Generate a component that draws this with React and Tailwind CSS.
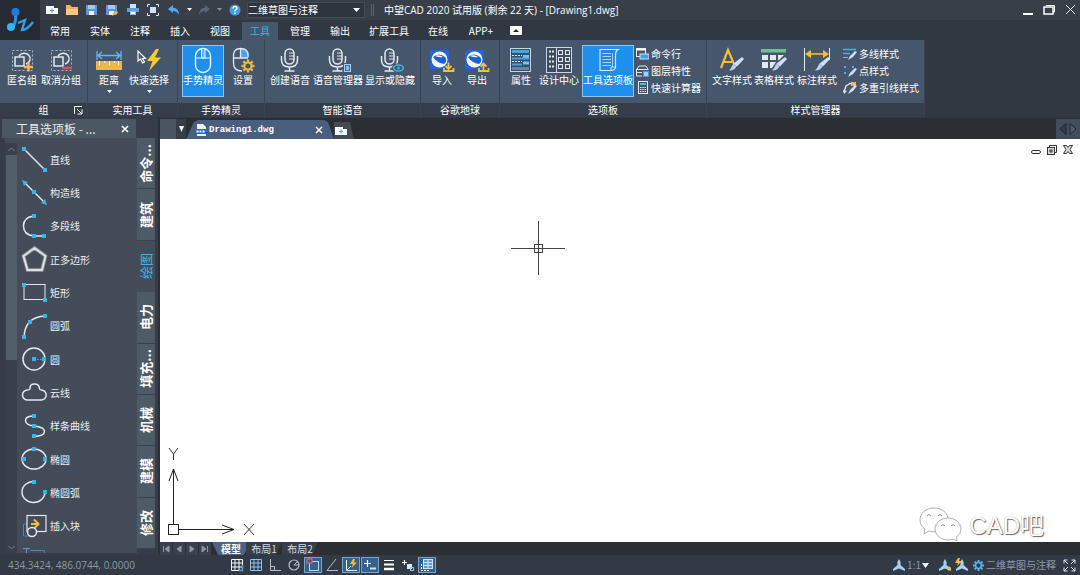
import { useState } from 'react';

const BLUE = '#3cb4ea';
const SKY = '#7cc0f0';
const GOLD = '#f5bd3a';
const LINE = '#e3e9f0';

const Svg = ({ w = 26, h = 26, children }) => (
    <svg width={w} height={h} viewBox={`0 0 ${w} ${h}`} fill="none" className="shrink-0" aria-hidden="true">
        {children}
    </svg>
);

const Dot = ({ x, y }) => <rect x={x - 2} y={y - 2} width="4" height="4" fill={BLUE} />;

const Brush = ({ x, y }) => (
    <g transform={`translate(${x} ${y})`}>
        <path d="M13 0 L15 2 L8 9.5 L4 7 Z" fill="#cfe0f8" />
        <path d="M4 7 L7.5 9.5 Q5 14 0 13.5 Q2.5 11 4 7 Z" fill="#b4d2fa" />
    </g>
);

const Gear = ({ x, y, r, color }) => (
    <g transform={`translate(${x} ${y})`} stroke={color}>
        <circle r={r * 0.55} strokeWidth={r * 0.32} />
        {[0, 45, 90, 135, 180, 225, 270, 315].map((a) => (
            <path key={a} d={`M0 ${-r * 0.65} V${-r}`} strokeWidth={r * 0.36} transform={`rotate(${a})`} />
        ))}
    </g>
);

/* ---- ribbon icons ---- */

const GroupIcon = ({ remove }) => (
    <Svg>
        <rect x="3.5" y="3.5" width="20" height="20" stroke="#aeb8c4" strokeDasharray="2 2" />
        <path d="M10 9 A6 5.5 0 1 1 17 17" stroke={LINE} strokeWidth="1.5" />
        <rect x="6" y="10" width="9" height="9" stroke={LINE} strokeWidth="1.5" />
        {remove ? (
            <path d="M14 21 H24" stroke="#e2504c" strokeWidth="2.5" />
        ) : (
            <path d="M15 20 H24 M19.5 15.5 V24.5" stroke={GOLD} strokeWidth="2.5" />
        )}
    </Svg>
);

const DistanceIcon = () => (
    <Svg>
        <path d="M1 4 V13 M25 4 V13 M2 8.5 H24 M6 5 L2 8.5 L6 12 M20 5 L24 8.5 L20 12" stroke="#6fb3e8" strokeWidth="1.3" />
        <rect x="0" y="14" width="26" height="9" fill="#f0b548" />
        <path d="M3.5 14 V18 M8.5 14 V16 M13.5 14 V18 M18.5 14 V16 M22.5 14 V18" stroke="#fff" />
    </Svg>
);

const QuickSelectIcon = () => (
    <Svg>
        <path d="M2 4 V14 L4.5 12 L6.5 16 L8.5 15 L6.5 11.5 H9.5 Z" stroke="#fff" strokeWidth="1.2" />
        <path d="M20 2 L11 14 H16.5 L13 24 L25 10.5 H19 L23 2 Z" fill="#fcc92f" />
    </Svg>
);

const MouseIcon = ({ gear }) => (
    <Svg w={26} h={28}>
        {gear ? (
            <>
                <path d="M11 3 H13 A6 6 0 0 1 18.5 12 H11 Z" fill="#4aa4e8" />
                <path d="M12 25 Q3.5 25 3.5 17 V9.5 Q3.5 2.5 10.5 2.5 Q18 2.5 18 9.5 V11 M3.5 12 H18 M10.5 3 V12" stroke={LINE} strokeWidth="1.3" />
                <Gear x={18} y={20} r={6.5} color={GOLD} />
            </>
        ) : (
            <>
                <rect x="5.5" y="2.5" width="15" height="24" rx="7.5" stroke="#eaf5ff" strokeWidth="1.4" />
                <path d="M5.5 12 H20.5" stroke="#eaf5ff" />
                <rect x="11.5" y="2.5" width="3.5" height="9.5" fill="#63b8fb" stroke="#eaf5ff" />
            </>
        )}
    </Svg>
);

const MicIcon = ({ badge }) => (
    <Svg w={28} h={26}>
        <rect x="9" y="2" width="9" height="15" rx="4.5" stroke={LINE} strokeWidth="1.5" />
        <path d="M5.5 9 V13 Q5.5 20 13.5 20 Q21.5 20 21.5 13 V9 M13.5 20 V23.5 M8.5 24 H18.5" stroke={LINE} strokeWidth="1.5" />
        <path d="M13 6 H18 M13 9 H18 M13 12 H18" stroke={LINE} />
        {badge === 'list' && (
            <>
                <rect x="19" y="16" width="9" height="9" fill="#46566b" />
                <rect x="20.5" y="17.5" width="6" height="7" fill="#386fa5" stroke="#9fd0f6" />
                <path d="M22 20 H25 M22 22 H25" stroke="#fff" />
            </>
        )}
        {badge === 'eye' && (
            <>
                <ellipse cx="22" cy="21" rx="6" ry="4.5" fill="#46566b" />
                <ellipse cx="22.5" cy="21" rx="4.8" ry="3" stroke={BLUE} strokeWidth="1.5" />
                <circle cx="22.5" cy="21" r="1.3" fill={BLUE} />
            </>
        )}
    </Svg>
);

const EarthIcon = ({ up }) => (
    <Svg>
        <rect x="1" y="3" width="19" height="19" fill="#1f66dd" />
        <circle cx="10.5" cy="12.5" r="8" fill="#f5f9ff" />
        <path d="M4 10 Q10 5 16 10 Q19 14 15 17 Q8 16 4 10 Z" fill="#1f5fd0" />
        <path d="M6 9 Q10 7 14 10 Q11 11 6 9 Z" fill="#fff" />
        <path
            d={up
                ? 'M19.5 23 V17 M16.5 19.5 L19.5 16.5 L22.5 19.5 M15 21 V24 H24.5 V21'
                : 'M19.5 15.5 V21.5 M16.5 19 L19.5 22 L22.5 19 M15 21 V24 H24.5 V21'}
            stroke="#f2c230"
            strokeWidth="1.8"
        />
    </Svg>
);

const PropertiesIcon = () => (
    <Svg>
        <rect x="2.5" y="1.5" width="20" height="23" fill="#33506f" stroke="#c9d6e4" />
        <rect x="4" y="3" width="17" height="3" fill="#4ea1dc" />
        <path d="M4 8.5 H14 M4 14.5 H14" stroke="#dbe5ef" strokeDasharray="2 1" />
        <path d="M15 9.5 H21 M15 16 H21" stroke={SKY} strokeWidth="3" />
        <path d="M4 11.5 H21 M4 17.5 H14" stroke="#4ea1dc" strokeWidth="2" />
        <path d="M4 21.5 H21" stroke="#708298" strokeWidth="3" />
    </Svg>
);

const DesignCenterIcon = () => (
    <Svg>
        <rect x=".5" y=".5" width="25" height="25" fill="#3d4b5d" stroke="#c9d6e4" />
        <path d="M10.5 1 V25" stroke="#c9d6e4" />
        <path d="M3 4.5 H9 M3 9.5 H9 M3 14.5 H9 M3 19.5 H9" stroke={LINE} strokeWidth="2" strokeDasharray="2 1" />
        {[3.5, 10.5, 17.5].map((y) => (
            <g key={y} stroke={LINE}>
                <rect x="12.5" y={y} width="4" height="4" />
                <rect x="19.5" y={y} width="4" height="4" />
            </g>
        ))}
    </Svg>
);

const PaletteIcon = () => (
    <Svg>
        <path d="M5 2.5 H23 Q20.5 4 20.5 8 V20 Q20 23.5 16 23.5 H5 Z" fill="#2b86da" stroke="#cfe9ff" strokeWidth="1.2" />
        <path d="M17.5 6 V20" stroke="#9fd0fb" />
        <path d="M7.5 6.5 H16 M7.5 9.5 H16 M7.5 12.5 H16 M7.5 15.5 H16 M7.5 18.5 H16" stroke="#a9d7ff" />
        <path d="M16 23 V20 H20" stroke="#cfe9ff" />
    </Svg>
);

const TextStyleIcon = () => (
    <Svg>
        <path d="M2 21 L9 3 L15 17 M5 15 H13" stroke={GOLD} strokeWidth="2.2" />
        <Brush x={10} y={10} />
    </Svg>
);

const TableStyleIcon = () => (
    <Svg>
        <rect x="0" y="2" width="25" height="3.5" fill="#6fc08c" />
        <path d="M1 8 H7 V13 H1 Z M9 8 H15 V13 H9 Z M17 8 H23 L18 13 H17 Z M1 15 H7 V21 H1 Z M9 15 H15 L11 21 H9 Z" fill={LINE} />
        <Brush x={11} y={10} />
    </Svg>
);

const DimStyleIcon = () => (
    <Svg>
        <path d="M.5 1 V24 M25.5 1 V13" stroke={LINE} />
        <path d="M3 7 H23" stroke={GOLD} strokeWidth="1.6" />
        <path d="M1 7 L7 3 V11 Z M25 7 L19 3 V11 Z" fill={GOLD} />
        <Brush x={11} y={10} />
    </Svg>
);

/* ---- small ribbon icons ---- */

const CommandIcon = () => (
    <Svg w={13} h={12}>
        <rect x=".5" y=".5" width="9" height="8" stroke={LINE} />
        <path d="M0 1.5 H10" stroke="#fff" strokeWidth="2" />
        <rect x="4" y="6" width="9" height="5" fill="#3fa0e4" stroke="#cfe4f6" />
    </Svg>
);

const LayerPropIcon = () => (
    <Svg w={13} h={12}>
        <path d="M1 4 L3 1 H10 L12 4 M.5 4.5 H12.5 M.5 7.5 H6 M.5 4 V11 H6" stroke={LINE} />
        <rect x="7" y="6" width="6" height="6" fill="#3fa0e4" />
        <path d="M8 8 H12 M8 10 H12" stroke="#fff" />
    </Svg>
);

const CalcIcon = () => (
    <Svg w={13} h={13}>
        <rect x="2.5" y=".5" width="9" height="12" fill="#40536a" stroke={LINE} />
        <path d="M4 3 H10" stroke="#5bb2ee" strokeWidth="2" />
        <path d="M4 6.5 H10 M4 8.5 H10 M4 10.5 H10" stroke={LINE} strokeDasharray="1.5 .8" />
    </Svg>
);

const SmallBrush = () => <path d="M14 4 L10 9 L5 12 L7 8 L12 3 Z" fill="#cfe0f8" />;

const MlineIcon = () => (
    <Svg w={14} h={12}>
        <path d="M0 1.5 H13 M0 5.5 H7" stroke={BLUE} strokeWidth="1.5" />
        <path d="M0 9.5 H5" stroke="#9fb0c2" />
        <SmallBrush />
    </Svg>
);

const PointIcon = () => (
    <Svg w={14} h={12}>
        <path d="M1 1 H3 V3 H1 Z M9 1 H11 V3 H9 Z M1 7 H3 V9 H1 Z" fill={BLUE} />
        <SmallBrush />
    </Svg>
);

const MleaderIcon = () => (
    <Svg w={14} h={12}>
        <path d="M1 10 L3 4 L7 1.5 H9" stroke={LINE} strokeWidth="1.3" />
        <path d="M0 8 L1 12 L4 9 Z" fill={LINE} />
        <rect x="8" y="0" width="5" height="4" fill={GOLD} />
        <SmallBrush />
    </Svg>
);

const RIBBON = [
    {
        label: '组',
        width: 'w-[88px]',
        pad: 'pl-0.5',
        launcher: true,
        tools: [
            { label: '匿名组', width: 'w-10', icon: <GroupIcon /> },
            { label: '取消分组', width: 'w-[38px]', icon: <GroupIcon remove /> },
        ],
    },
    {
        label: '实用工具',
        width: 'w-[90px]',
        tools: [
            { label: '距离', width: 'w-[42px]', icon: <DistanceIcon />, caret: true },
            { label: '快速选择', width: 'w-[38px]', icon: <QuickSelectIcon />, caret: true },
        ],
    },
    {
        label: '手势精灵',
        width: 'w-[87px]',
        pad: 'pl-1',
        tools: [
            { label: '手势精灵', width: 'w-[42px]', icon: <MouseIcon />, active: true },
            { label: '设置', width: 'w-[38px]', icon: <MouseIcon gear /> },
        ],
    },
    {
        label: '智能语音',
        width: 'w-[156px]',
        tools: [
            { label: '创建语音', width: 'w-[50px]', icon: <MicIcon /> },
            { label: '语音管理器', width: 'w-[46px]', icon: <MicIcon badge="list" /> },
            { label: '显示或隐藏', width: 'w-[58px]', icon: <MicIcon badge="eye" /> },
        ],
    },
    {
        label: '谷歌地球',
        width: 'w-[79px]',
        tools: [
            { label: '导入', width: 'w-[42px]', icon: <EarthIcon /> },
            { label: '导出', width: 'w-7', icon: <EarthIcon up /> },
        ],
    },
    {
        label: '选项板',
        width: 'w-[207px]',
        tools: [
            { label: '属性', width: 'w-[42px]', icon: <PropertiesIcon /> },
            { label: '设计中心', width: 'w-[34px] mr-1.5', icon: <DesignCenterIcon /> },
            { label: '工具选项板', width: 'w-[52px] mr-0.5', icon: <PaletteIcon />, active: true },
        ],
        small: [
            { label: '命令行', icon: <CommandIcon /> },
            { label: '图层特性', icon: <LayerPropIcon /> },
            { label: '快速计算器', icon: <CalcIcon /> },
        ],
    },
    {
        label: '样式管理器',
        width: 'w-[218px]',
        tools: [
            { label: '文字样式', width: 'w-[50px]', icon: <TextStyleIcon /> },
            { label: '表格样式', width: 'w-[34px]', icon: <TableStyleIcon /> },
            { label: '标注样式', width: 'w-[52px]', icon: <DimStyleIcon /> },
        ],
        small: [
            { label: '多线样式', icon: <MlineIcon /> },
            { label: '点样式', icon: <PointIcon /> },
            { label: '多重引线样式', icon: <MleaderIcon /> },
        ],
    },
];

const MENU = [
    { label: '常用', width: 'w-10' },
    { label: '实体', width: 'w-10' },
    { label: '注释', width: 'w-10' },
    { label: '插入', width: 'w-10' },
    { label: '视图', width: 'w-10' },
    { label: '工具', width: 'w-9 mx-0.5' },
    { label: '管理', width: 'w-10' },
    { label: '输出', width: 'w-10' },
    { label: '扩展工具', width: 'w-[58px]' },
    { label: '在线', width: 'w-10' },
    { label: 'APP+', width: 'w-[46px]' },
];

/* ---- quick access ---- */

const Caret = ({ color = '#fff' }) => (
    <Svg w={5} h={4}>
        <path d="M0 0 H5 L2.5 3 Z" fill={color} />
    </Svg>
);

const Disk = ({ as }) => (
    <Svg w={12} h={12}>
        <rect x="0" y="1" width="11" height="10" fill="#5d97d8" />
        <rect x="2" y="1" width="7" height="4" fill="#a9c9ec" />
        <rect x="3" y="7" width="5" height="4" fill="#eef5fc" />
        {as && <path d="M6 12 L7 9 L11 7 L12 9 Z" fill={GOLD} />}
    </Svg>
);

const NewIcon = () => (
    <Svg w={12} h={10}>
        <path d="M0 1 H8 V3 H12 V9 H0 Z" fill="#fff" />
        <path d="M6 3.5 V7.5 M4 5.5 H8" stroke="#4aa4e8" strokeWidth="1.2" />
    </Svg>
);

const UndoArrow = ({ flip, color }) => (
    <Svg w={12} h={12}>
        <path transform={flip ? 'translate(12 0) scale(-1 1)' : undefined} d="M0 5 L5 1 V3.5 Q11 4 11 11 Q9 7 5 7 V9 Z" fill={color} />
    </Svg>
);

const QUICK = [
    { label: '新建', width: 'w-5', icon: <NewIcon /> },
    {
        label: '打开',
        width: 'w-5',
        icon: (
            <Svg w={12} h={12}>
                <path d="M0 1 H4 L6 3 H12 V11 H0 Z" fill="#f5b060" />
                <path d="M0 5 H12 V11 H0 Z" fill="#fcc684" />
            </Svg>
        ),
    },
    { label: '保存', width: 'w-5', icon: <Disk /> },
    { label: '另存为', width: 'w-5', icon: <Disk as /> },
    {
        label: '打印',
        width: 'w-[21px]',
        icon: (
            <Svg w={12} h={12}>
                <rect x="3" y="0" width="6" height="4" fill="#cfe4f6" />
                <rect x="0" y="4" width="12" height="4" fill="#5ba3e4" />
                <rect x="3.5" y="7.5" width="5" height="3" fill="#fff" stroke="#8fc2ee" />
            </Svg>
        ),
    },
    {
        label: '打印预览',
        width: 'w-5',
        icon: (
            <Svg w={12} h={12}>
                <path d="M.5 3 V.5 H3 M9 .5 H11.5 V3 M11.5 9 V11.5 H9 M3 11.5 H.5 V9" stroke={LINE} />
                <rect x="3" y="3" width="6" height="6" fill="#cfe4f6" />
            </Svg>
        ),
    },
    { label: '放弃', width: 'w-[22px]', icon: <UndoArrow color="#5aa5e6" /> },
    { label: '放弃列表', width: 'w-2', icon: <Caret /> },
    { label: '重做', width: 'w-[22px]', icon: <UndoArrow flip color="#55677e" /> },
    { label: '重做列表', width: 'w-2', icon: <Caret color="#8a94a2" /> },
    {
        label: '帮助',
        width: 'w-6',
        icon: (
            <Svg w={12} h={12}>
                <circle cx="6" cy="6" r="5.5" fill="#3f9fe6" />
                <path d="M4 4.5 Q4 2.5 6 2.5 Q8 2.5 8 4.3 Q8 5.5 6 6.5 V7.5 M6 8.5 V10" stroke="#fff" strokeWidth="1.3" />
            </Svg>
        ),
    },
];

/* ---- palette ---- */

const DRAW = [
    { label: '直线', icon: <><path d="M3 3 L24 24" stroke={LINE} strokeWidth="1.5" /><Dot x={3} y={3} /><Dot x={24} y={24} /></> },
    {
        label: '构造线',
        icon: <><path d="M3 3 L24 24" stroke={LINE} strokeWidth="1.5" /><path d="M1 1 L7 3 L3 7 Z M26 26 L24 20 L20 24 Z" fill={BLUE} /><Dot x={13} y={13} /></>,
    },
    { label: '多段线', icon: <><path d="M13 3 Q2.5 4 2.5 13 Q2.5 22 13 23 H24" stroke={LINE} strokeWidth="1.5" /><Dot x={13} y={3} /><Dot x={13} y={23} /><Dot x={23} y={23} /></> },
    { label: '正多边形', icon: <><path d="M13.5 2 L24.5 10 L21 24 H6.5 L2.5 10 Z" stroke="#8d949c" strokeWidth="3.5" /><path d="M13.5 2 L24.5 10 L21 24 H6.5 L2.5 10 Z" stroke="#dde1e4" strokeWidth="1.8" /></> },
    { label: '矩形', icon: <><rect x="3" y="5.5" width="21" height="15" stroke={LINE} /><Dot x={3} y={6} /><Dot x={24} y={21} /></> },
    { label: '圆弧', icon: <><path d="M3 24 Q4 4 24 3" stroke={LINE} strokeWidth="1.5" /><Dot x={3} y={24} /><Dot x={9} y={9} /><Dot x={24} y={3} /></> },
    { label: '圆', icon: <><circle cx="13" cy="13" r="11" stroke={LINE} strokeWidth="1.5" /><path d="M13 13.5 H24" stroke={BLUE} strokeDasharray="1.5 1.5" /><Dot x={13} y={13} /><Dot x={23} y={13} /></> },
    { label: '云线', icon: <path d="M7 21 A5 5 0 0 1 6 11 Q8.5 11 9 10 Q8.500 5 13.5 5 Q18.5 5 18.5 10 Q19 11 20.500 11 A5 5 0 0 1 20 21 Z" stroke={LINE} strokeWidth="1.5" /> },
    { label: '样条曲线', icon: <><path d="M13 3 Q4 3 4.5 8 Q5 12 13 13 Q23.5 14 23.5 18.5 Q23.5 23 13 23.5" stroke={LINE} strokeWidth="1.5" /><Dot x={13} y={3} /><Dot x={13} y={13} /><Dot x={13} y={23} /></> },
    { label: '椭圆', icon: <><ellipse cx="13" cy="13" rx="12" ry="10" stroke={LINE} strokeWidth="1.5" /><Dot x={13} y={3} /><Dot x={3} y={13} /><Dot x={24} y={13} /></> },
    { label: '椭圆弧', icon: <><path d="M13 2.5 A11.5 10.5 0 1 0 24 13" stroke={LINE} strokeWidth="1.5" /><Dot x={13} y={3} /><Dot x={24} y={13} /></> },
    {
        label: '插入块',
        icon: (
            <>
                <path d="M6 11 H2.5 V23 H8" stroke="#4c86b8" />
                <rect x="6" y="2.5" width="19" height="16" stroke={LINE} strokeWidth="1.2" />
                <path d="M10 11 H17 M13 6.5 L17.5 11 L13 15.5" stroke={GOLD} strokeWidth="2" />
                <circle cx="11" cy="19" r="4.5" fill="#434c58" stroke={LINE} strokeWidth="1.5" />
            </>
        ),
    },
];

const CATEGORIES = ['命令...', '建筑', '绘图', '电力', '填充...', '机械', '建模', '修改'];

/* ---- status bar ---- */

const STATUS = [
    { label: '捕捉', icon: <><path d="M1.5 1.5 H12.5 V12.5 H1.5 Z M1 5 H13 M1 9 H13 M5 1 V13 M9 1 V13" stroke="#f2f6fa" /><path d="M9 12.5 H12.5 V7" stroke="#4f9fe0" strokeWidth="1.5" /></> },
    { label: '栅格', icon: <path d="M1.5 1.5 H12.5 V12.5 H1.5 Z M1 5 H13 M1 9 H13 M5 1 V13 M9 1 V13" stroke="#8fc2ee" /> },
    { label: '正交', icon: <path d="M2.5 1 V12.5 H13 M3 8.5 H6.5 V12" stroke="#b4bdc8" /> },
    { label: '极轴', icon: <><circle cx="7" cy="7" r="5" stroke="#b4bdc8" strokeWidth="1.2" /><path d="M7 7 L11 3 M7 7 H12" stroke="#b4bdc8" /></> },
    { label: '对象捕捉', active: true, icon: <><rect x="3.5" y="3.5" width="9" height="9" stroke="#c2d4e6" /><rect x="1" y="1" width="5" height="4" fill="#35618c" stroke="#e2625a" strokeWidth="1.3" /></> },
    { label: '对象追踪', icon: <path d="M11 1 L2 12.5 H13" stroke="#b4bdc8" /> },
    { label: '动态 UCS', active: true, icon: <><path d="M2.5 2 V12.5 H13 M2.5 12.5 L7 8" stroke="#eef4fa" /><path d="M9 1 L6 6 H9 L7.5 10 L13 4.5 H10 L11 1 Z" fill={GOLD} /></> },
    { label: '动态输入', active: true, icon: <><path d="M1 5.5 H8 M4.5 2 V9" stroke="#fff" strokeWidth="1.2" /><path d="M7 10.5 H13" stroke="#cfe4f6" strokeWidth="2" /></> },
    { label: '线宽', icon: <><path d="M2 2.5 H12" stroke="#fff" /><path d="M2 6.5 H12" stroke="#fff" strokeWidth="2" /><path d="M2 11 H12" stroke="#fff" strokeWidth="2.5" /></> },
    { label: '循环选择', icon: <><path d="M1 4.5 H6 M3.5 2 V7" stroke="#fff" strokeWidth="1.2" /><rect x="6" y="6" width="5" height="5" fill="#d9e8f5" /><rect x="9.5" y="9.5" width="3" height="3" stroke="#8fc2ee" /></> },
    { label: '模型', active: true, icon: <><rect x="3.5" y="1.5" width="9" height="9" fill="#5f9bd0" stroke="#cfe4f6" /><path d="M4 4.5 H12 M4 7.5 H12 M8 2 V10" stroke="#cfe4f6" /><path d="M1.5 6 V12.5 H10" stroke="#fff" strokeDasharray="2 1" /></> },
];

const Annot = ({ badge }) => (
    <Svg w={14} h={14}>
        <path d="M7 1 Q9 3 8.5 7 L13 11 V13 L7 10.5 L1 13 V11 L5.5 7 Q5 3 7 1 Z" fill="#a5d0f5" />
        {badge === 'bulb' && <circle cx="11" cy="10.5" r="2" fill={GOLD} />}
        {badge === 'bolt' && <path d="M3 0 L0 5 H3 L2 8 L7 3 H4 L5 0 Z" fill={GOLD} />}
    </Svg>
);

const TitleBar = () => (
    <div className="flex h-5 items-center bg-[#383f49] pl-0.5">
        {QUICK.map((q) => (
            <button key={q.label} aria-label={q.label} className={`${q.width} flex shrink-0 items-center justify-center`}>
                {q.icon}
            </button>
        ))}
        <div className="relative flex h-4 w-[118px] shrink-0 items-center border border-[#454c56] bg-[#2f353e]">
            <select aria-label="工作空间" className="w-full appearance-none bg-transparent text-[10px] leading-4 text-white outline-none">
                <option>二维草图与注释</option>
            </select>
            <div className="pointer-events-none absolute right-1">
                <Svg w={7} h={4}>
                    <path d="M0 0 H7 L3.5 4 Z" fill="#fff" />
                </Svg>
            </div>
        </div>
        <span className="mx-1.5 h-3 w-[3px] shrink-0 border-x border-[#5b626c]" />
        <h1 className="flex-1 whitespace-nowrap pl-1 font-['Open_Sans','Noto_Sans_CJK_SC',sans-serif] text-[10px] leading-4">
            中望CAD 2020 试用版 (剩余 22 天) - [Drawing1.dwg]
        </h1>
        <div className="flex items-center gap-2.5 pr-1">
            <button aria-label="最小化">
                <Svg w={10} h={12}><path d="M0 10 H10" stroke="#fff" strokeWidth="2" /></Svg>
            </button>
            <button aria-label="还原">
                <Svg w={12} h={12}>
                    <path d="M3 2 V1.5 H11.5 V8 H10" stroke="#fff" />
                    <rect x="1" y="3" width="9" height="7" stroke="#fff" strokeWidth="1.5" />
                </Svg>
            </button>
            <button aria-label="关闭">
                <Svg w={11} h={12}><path d="M1 1 L10 10 M10 1 L1 10" stroke="#e6e9ec" /></Svg>
            </button>
        </div>
    </div>
);

const ToolButton = ({ tool }) => (
    <button
        className={`${tool.width} flex h-[52px] shrink-0 flex-col items-center border ${tool.active ? 'border-[#8cc6f7] bg-[#1f8fee]' : 'border-transparent'}`}
    >
        <span className="flex h-7 items-center">{tool.icon}</span>
        <span className="whitespace-nowrap text-[10px] leading-3">{tool.label}</span>
        {tool.caret && <span className="mt-1"><Caret /></span>}
    </button>
);

const RibbonGroup = ({ group }) => (
    <section className={`${group.width} shrink-0 border-r border-[#3a4352]`}>
        <div className={`${group.pad ?? ''} flex h-[63px] bg-[#46566b] pt-[5px]`}>
            {group.tools.map((tool) => (
                <ToolButton key={tool.label} tool={tool} />
            ))}
            {group.small && (
                <div className="flex flex-col">
                    {group.small.map((item) => (
                        <button key={item.label} className="flex h-[17px] items-center gap-0.5 whitespace-nowrap text-[10px] leading-3">
                            {item.icon}
                            {item.label}
                        </button>
                    ))}
                </div>
            )}
        </div>
        <div className="relative flex h-[14px] items-center justify-center bg-[#363d4a] text-[10px] leading-3">
            <h2>{group.label}</h2>
            {group.launcher && (
                <button aria-label="更多" className="absolute right-1">
                    <Svg w={9} h={9}>
                        <path d="M.5 8 V.5 H8 M3 3 L7.5 7.5 M8 3.5 V8 H3.5" stroke="#fff" />
                    </Svg>
                </button>
            )}
        </div>
    </section>
);

const ToolPalette = ({ category, onSelect }) => (
    <aside className="flex w-[160px] shrink-0 flex-col border-r-2 border-[#2b2f36] bg-[#363d48] pt-px">
        <div className="ml-0.5 flex h-[19px] w-[134px] items-center bg-[#4b5763] pl-3.5 pr-[7px]">
            <h2 className="flex-1 text-xs leading-4 text-[#e8ebee]">工具选项板 - ...</h2>
            <button aria-label="关闭选项板">
                <Svg w={8} h={8}><path d="M1 1 L7 7 M7 1 L1 7" stroke="#fff" strokeWidth="1.6" /></Svg>
            </button>
        </div>
        <div className="flex min-h-0 flex-1 pb-0.5">
            <div className="ml-[5px] flex w-[132px] overflow-hidden bg-[#434c58] pt-[5px]">
                <div className="flex w-3 flex-col border-l border-[#39414c] bg-[#3a404a]">
                    <button aria-label="向上滚动" className="flex h-3 items-center justify-center">
                        <Svg w={7} h={5}><path d="M.5 4 L3.5 1 L6.5 4" stroke="#7c8590" /></Svg>
                    </button>
                    <div className="flex-1">
                        <div className="h-[53%] bg-[#525e69]" />
                    </div>
                    <button aria-label="向下滚动" className="flex h-3 items-center justify-center">
                        <Svg w={7} h={5}><path d="M.5 1 L3.5 4 L6.5 1" stroke="#7c8590" /></Svg>
                    </button>
                </div>
                <ul className="flex flex-1 flex-col pl-1">
                    {DRAW.map((item) => (
                        <li key={item.label} className="flex flex-1 items-center">
                            <button className="flex items-center gap-0.5 whitespace-nowrap text-[10px] leading-3 text-[#eceff2]">
                                <Svg w={27} h={27}>{item.icon}</Svg>
                                {item.label}
                            </button>
                        </li>
                    ))}
                    <li className="h-2.5 overflow-hidden pt-1">
                        <Svg w={27} h={20}>
                            <path d="M5.5 1 V16 M2 1.5 H9" stroke="#5a9bd0" />
                            <path d="M9 3.5 H23.5 V20" stroke="#4c86b8" />
                        </Svg>
                    </li>
                </ul>
            </div>
            <div role="tablist" className="mb-1 flex w-[18px] flex-col">
                {CATEGORIES.map((name) => (
                    <button
                        key={name}
                        role="tab"
                        aria-selected={name === category}
                        onClick={() => onSelect(name)}
                        className={`flex flex-1 items-center justify-center border-b ${name === category ? 'border-[#434c58] bg-[#434c58] text-[#3cb4ea]' : 'border-[#39414c] bg-[#4e5a65] font-bold text-white'}`}
                    >
                        <span className="rotate-180 whitespace-nowrap text-[13px] leading-4 [text-orientation:sideways] [writing-mode:vertical-rl]">
                            {name}
                        </span>
                    </button>
                ))}
            </div>
        </div>
    </aside>
);

const DocumentTabs = () => (
    <div className="flex h-[21px] items-end bg-[#2b2e33]">
        <div className="h-5 w-4 bg-[#4a5561]" />
        <button aria-label="文档列表" className="flex h-5 w-2.5 items-center justify-center bg-[#363d48]">
            <Svg w={5} h={6}><path d="M0 0 H5 L2.5 6 Z" fill="#fff" /></Svg>
        </button>
        <div className="flex h-[19px] w-[148px] items-center bg-[#4a5f80] pl-[9px] pr-[11px] [clip-path:polygon(0_100%,8px_10%,12px_0,138px_0,142px_10%,100%_100%)]">
            <Svg w={12} h={12}>
                <path d="M2 0 H8 L11 3 V12 H2 Z" fill="#eaf2fc" />
                <rect x="0" y="5" width="12" height="5" fill="#1f66dd" />
                <path d="M1.5 7.5 H10.5" stroke="#fff" strokeWidth="2" strokeDasharray="2 1" />
            </Svg>
            <button className="flex-1 pl-0.5 text-left font-['Liberation_Mono',monospace] text-[9px] font-bold leading-3">Drawing1.dwg</button>
            <button aria-label="关闭图形">
                <Svg w={8} h={8}><path d="M1 1 L7 7 M7 1 L1 7" stroke="#fff" strokeWidth="1.5" /></Svg>
            </button>
        </div>
        <button aria-label="新建图形" className="flex h-[17px] w-5 items-center bg-[#434a54] pl-px [clip-path:polygon(0_0,80%_0,100%_100%,0_100%)]">
            <NewIcon />
        </button>
        <div className="ml-auto flex h-5 w-6 items-center justify-center gap-0.5 bg-[#414d5d]">
            <button aria-label="向左">
                <Svg w={8} h={14}><path d="M7 1.5 V12.5 L1 7 Z" fill="#313b49" stroke="#1e2631" /></Svg>
            </button>
            <button aria-label="向右">
                <Svg w={8} h={14}><path d="M1 1.5 V12.5 L7 7 Z" fill="#4d5c70" stroke="#1e2631" /></Svg>
            </button>
        </div>
    </div>
);

const Canvas = () => (
    <div className="relative min-h-0 flex-1 overflow-hidden bg-white">
        <div className="flex justify-end gap-1.5 pr-[7px] pt-1.5">
            <button aria-label="最小化图形">
                <Svg w={10} h={11}><rect x=".5" y="5.5" width="9" height="3" rx="1.5" stroke="#333" /></Svg>
            </button>
            <button aria-label="还原图形">
                <Svg w={10} h={11}>
                    <path d="M2.5 2.5 V.5 H9.5 V7.5 H7.5" stroke="#333" />
                    <rect x=".5" y="2.5" width="7" height="7" fill="#ddd" stroke="#333" />
                    <rect x="3" y="5" width="2" height="2" stroke="#333" />
                </Svg>
            </button>
            <button aria-label="关闭图形窗口">
                <Svg w={10} h={11}>
                    <path d="M.5 .5 H3.5 L5 2.5 L6.5 .5 H9.5 L7 4.5 L9.5 8.5 H6.5 L5 6.5 L3.5 8.5 H.5 L3 4.5 Z" fill="#ddd" stroke="#333" />
                </Svg>
            </button>
        </div>
        <div className="absolute left-[351px] top-[82px]">
            <Svg w={54} h={54}>
                <path d="M0 27.5 H54 M27.5 0 V54" stroke="#444" />
                <rect x="23.5" y="23.5" width="8" height="8" stroke="#444" />
            </Svg>
        </div>
        <div className="absolute bottom-1.5 left-1.5">
            <Svg w={90} h={90}>
                <rect x="2.5" y="78.5" width="10" height="10" stroke="#222" />
                <path d="M7.5 78 V23 M3 35 L7.5 23 L12 35 M12 83.5 H68 M56 79 L68 83.5 L56 88" stroke="#222" />
                <path d="M3 2 L7.5 8 L12 2 M7.5 8 V14 M78 78 L88 89 M88 78 L78 89" stroke="#333" />
            </Svg>
        </div>
        <div className="absolute bottom-0 right-9 flex items-end">
            <Svg w={44} h={38}>
                <g fill="#fff" stroke="#b0b0b0">
                    <path d="M15 4 C7 4 1 9 1 16 C1 20 3 23 6 25 L5 30 L10 27 Q14 28.5 18 27.5 M15 4 C22 4 28 8 29 14" />
                    <path d="M29 14 C22 14 16 19 16 25 C16 31 22 36 29 36 Q32 36 34 35 L38 37 L37.5 33 Q42 30 42 25 C42 19 36 14 29 14 Z" />
                    <path d="M8 12 Q10 9 12 12 M19 12 Q21 9 23 12 M22 22 Q24 19 26 22 M32 22 Q34 19 36 22" stroke="#888" fill="none" />
                </g>
            </Svg>
            <span className="pl-1.5 font-['Liberation_Sans','Noto_Sans_CJK_SC',sans-serif] text-[24px] leading-8 text-white [text-shadow:1px_1px_1px_#666,0_0_1px_#999]">CAD吧</span>
        </div>
    </div>
);

const NAV = [
    { label: '第一个', d: 'M1.5 1 V7 M7 1 V7 L3 4 Z' },
    { label: '上一个', d: 'M6 1 V7 L2 4 Z' },
    { label: '下一个', d: 'M2 1 V7 L6 4 Z' },
    { label: '最后一个', d: 'M6.5 1 V7 M1 1 V7 L5 4 Z' },
];

const LayoutTabs = () => (
    <div className="flex h-[13px] items-stretch bg-[#2b2e33] text-[10px] leading-3">
        {NAV.map((n) => (
            <button key={n.label} aria-label={n.label} className="mr-px flex w-3 items-center justify-center bg-[#3a414c]">
                <Svg w={8} h={8}><path d={n.d} fill="#8d96a1" stroke="#8d96a1" /></Svg>
            </button>
        ))}
        <button className="w-[38px] bg-[#4a6584] font-bold [clip-path:polygon(0_0,100%_0,84%_100%,16%_100%)]">模型</button>
        <button className="-ml-1 w-9 bg-[#383e47] text-[#d8dce0] [clip-path:polygon(0_0,100%_0,84%_100%,0_100%)]">布局1</button>
        <button className="w-9 bg-[#383e47] text-[#d8dce0] [clip-path:polygon(0_0,100%_0,84%_100%,0_100%)]">布局2</button>
    </div>
);

const StatusBar = () => (
    <footer className="flex h-5 shrink-0 items-center bg-[#323a46] text-[#8e98a5]">
        <span className="w-[228px] shrink-0 pl-2 font-['Open_Sans',sans-serif] text-[10px] leading-4">434.3424, 486.0744, 0.0000</span>
        <div className="flex gap-px">
            {STATUS.map((s) => (
                <button
                    key={s.label}
                    aria-label={s.label}
                    aria-pressed={!!s.active}
                    className={`flex h-4 w-[18px] items-center justify-center border ${s.active ? 'border-[#6ea6d4] bg-[#35618c]' : 'border-transparent'}`}
                >
                    <Svg w={14} h={14}>{s.icon}</Svg>
                </button>
            ))}
        </div>
        <div className="ml-auto flex items-center gap-[3px] pr-1 text-[10px] leading-4">
            <button aria-label="注释比例" className="flex items-center gap-px pr-1.5">
                <Annot />
                1:1
                <Svg w={7} h={5}><path d="M0 0 H7 L3.5 5 Z" fill="#fff" /></Svg>
            </button>
            <button aria-label="注释可见性"><Annot badge="bulb" /></button>
            <button aria-label="自动缩放"><Annot badge="bolt" /></button>
            <button className="flex items-center gap-px whitespace-nowrap">
                <Svg w={13} h={13}><Gear x={6.5} y={6.5} r={5.5} color="#56b4f0" /></Svg>
                二维草图与注释
            </button>
            <button aria-label="全屏显示" className="pl-1">
                <Svg w={13} h={13}>
                    <path d="M1 4.5 V1 H4.5 M8.5 1 H12 V4.5 M12 8.5 V12 H8.5 M4.5 12 H1 V8.5 M1 1 L5 5 M12 1 L8 5 M12 12 L8 8 M1 12 L5 8" stroke="#dfe4ea" />
                </Svg>
            </button>
        </div>
    </footer>
);

export default function App() {
    const [tab, setTab] = useState('工具');
    const [category, setCategory] = useState('绘图');

    return (
        <div className="flex h-screen flex-col overflow-hidden bg-[#2b2e33] font-['Noto_Sans_CJK_SC',sans-serif] text-white">
            <header className="shrink-0 bg-[#323842]">
                <div className="flex">
                    <button aria-label="应用程序菜单" className="flex h-10 w-10 shrink-0 items-center justify-center bg-[#262b33]">
                        <Svg w={30} h={30}>
                            <path d="M10 6 Q12 16 8 22" stroke="#2a8fe8" strokeWidth="3" />
                            <circle cx="10.5" cy="7" r="4" fill="#1f7be0" />
                            <circle cx="6" cy="22" r="4" fill="#35b4f0" />
                            <path d="M13 18 L20 15 L17 25 Q22 25 28 17" stroke="#2fa0ea" strokeWidth="2.4" />
                        </Svg>
                    </button>
                    <div className="min-w-0 flex-1">
                        <TitleBar />
                        <nav className="flex h-5 items-end">
                            {MENU.map((m) => (
                                <button
                                    key={m.label}
                                    onClick={() => setTab(m.label)}
                                    className={`${m.width} h-[18px] shrink-0 text-[10px] leading-[18px] ${tab === m.label ? 'bg-[#46566b] text-[#3cb4ea]' : ''}`}
                                >
                                    {m.label}
                                </button>
                            ))}
                            <button aria-label="收起功能区" className="ml-1.5 self-center">
                                <Svg w={12} h={9}>
                                    <rect width="12" height="9" fill="#fff" />
                                    <path d="M3 6 H9 L6 3 Z" fill="#222" />
                                </Svg>
                            </button>
                        </nav>
                    </div>
                </div>
                <div className="flex h-[78px]">
                    {RIBBON.map((group) => (
                        <RibbonGroup key={group.label} group={group} />
                    ))}
                </div>
            </header>
            <main className="flex min-h-0 flex-1">
                <ToolPalette category={category} onSelect={setCategory} />
                <section className="flex min-w-0 flex-1 flex-col">
                    <DocumentTabs />
                    <Canvas />
                    <LayoutTabs />
                </section>
            </main>
            <StatusBar />
        </div>
    );
}
